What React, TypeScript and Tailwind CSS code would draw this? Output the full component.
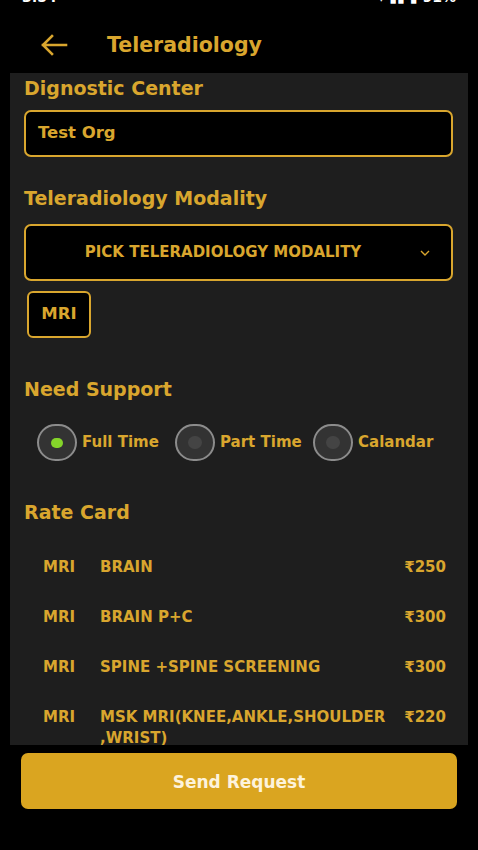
import { useState } from "react";

const gold = "text-[#d9a62e]";

interface RateRow {
  modality: string;
  name: string;
  price: string;
}

const rates: RateRow[] = [
  { modality: "MRI", name: "BRAIN", price: "₹250" },
  { modality: "MRI", name: "BRAIN P+C", price: "₹300" },
  { modality: "MRI", name: "SPINE +SPINE SCREENING", price: "₹300" },
  { modality: "MRI", name: "MSK MRI(KNEE,ANKLE,SHOULDER ,WRIST)", price: "₹220" },
];

const supportOptions = ["Full Time", "Part Time", "Calandar"];

function Radio({ label, checked, onClick }: { label: string; checked: boolean; onClick: () => void }) {
  return (
    <button onClick={onClick} className="flex w-[138px] items-center gap-[5px]">
      <span className="flex h-[37px] w-[40px] shrink-0 items-center justify-center rounded-full border-2 border-[#8c8c8c] bg-[#333333]">
        {checked ? (
          <span className="h-[10px] w-[12px] rounded-full bg-[#84d42a]" />
        ) : (
          <span className="h-[13px] w-[14px] rounded-full bg-[#444444]" />
        )}
      </span>
      <span className={`whitespace-nowrap text-[15px] font-bold ${gold}`}>{label}</span>
    </button>
  );
}

export default function App() {
  const [support, setSupport] = useState("Full Time");

  return (
    <div className="flex h-[850px] w-[478px] flex-col overflow-hidden bg-black font-['DejaVu_Sans',sans-serif]">
      <div className="h-[14px] overflow-hidden">
        <div className="-mt-[11px] flex justify-between px-[22px] text-[14px] font-bold leading-[16px] text-white">
          <span>3:54</span>
          <span>▾ ▮▮ ▮ 91%</span>
        </div>
      </div>

      <header className="flex h-[59px] items-center pt-[3px]">
        <button className="ml-[40px] flex h-[24px] w-[28px] items-center">
          <svg width="28" height="22" viewBox="0 0 28 22" fill="none" stroke="#d9a62e" strokeWidth="2.6" strokeLinecap="square">
            <path d="M26 11H3M12 2L3 11l9 9" />
          </svg>
        </button>
        <h1 className={`ml-[39px] text-[20.5px] font-bold ${gold}`}>Teleradiology</h1>
      </header>

      <main className="mx-[10px] h-[672px] overflow-hidden bg-[#1e1e1e] px-[14px] pt-[3px]">
        <h2 className={`text-[19px] font-bold leading-[24px] ${gold}`}>Dignostic Center</h2>
        <div className="mt-[10px] mr-[1px] flex h-[47px] items-center rounded-[7px] border-2 border-[#d9a62e] bg-black px-[12px]">
          <span className={`text-[16.5px] font-bold ${gold}`}>Test Org</span>
        </div>

        <h2 className={`mt-[29px] text-[19px] font-bold leading-[24px] ${gold}`}>Teleradiology Modality</h2>
        <div className="mt-[14px] mr-[1px] flex h-[57px] items-center rounded-[7px] border-2 border-[#d9a62e] bg-black">
          <span className={`flex-1 text-center text-[15px] font-bold ${gold}`}>PICK TELERADIOLOGY MODALITY</span>
          <svg className="mr-[21px]" width="10" height="6" viewBox="0 0 10 6" fill="none" stroke="#d9a62e" strokeWidth="1.4">
            <path d="M1 1l4 4 4-4" />
          </svg>
        </div>

        <div className="mt-[10px] ml-[3px] flex h-[47px] w-[64px] items-center justify-center rounded-[6px] border-2 border-[#d9a62e] bg-black">
          <span className={`text-[16.5px] font-bold ${gold}`}>MRI</span>
        </div>

        <h2 className={`mt-[39px] text-[19px] font-bold leading-[24px] ${gold}`}>Need Support</h2>
        <div className="mt-[23px] ml-[13px] flex items-center">
          {supportOptions.map((option) => (
            <Radio key={option} label={option} checked={support === option} onClick={() => setSupport(option)} />
          ))}
        </div>

        <h2 className={`mt-[39px] text-[19px] font-bold leading-[24px] ${gold}`}>Rate Card</h2>
        <div className="mt-[19px]">
          {rates.map((rate) => (
            <div key={rate.name} className="flex min-h-[50px] items-start pt-[14px] pl-[19px] pr-[8px]">
              <span className={`w-[57px] shrink-0 text-[15px] font-bold leading-[21px] ${gold}`}>{rate.modality}</span>
              <span className={`w-[300px] shrink-0 text-[15px] font-bold leading-[21px] ${gold}`}>{rate.name}</span>
              <span className={`flex-1 text-right text-[15px] font-bold leading-[21px] ${gold}`}>{rate.price}</span>
            </div>
          ))}
        </div>
      </main>

      <button className="mx-[21px] mt-[8px] h-[56px] rounded-[7px] bg-[#daa520] pt-[3px] text-[17px] font-bold text-[#fdf3dc]">
        Send Request
      </button>
    </div>
  );
}
